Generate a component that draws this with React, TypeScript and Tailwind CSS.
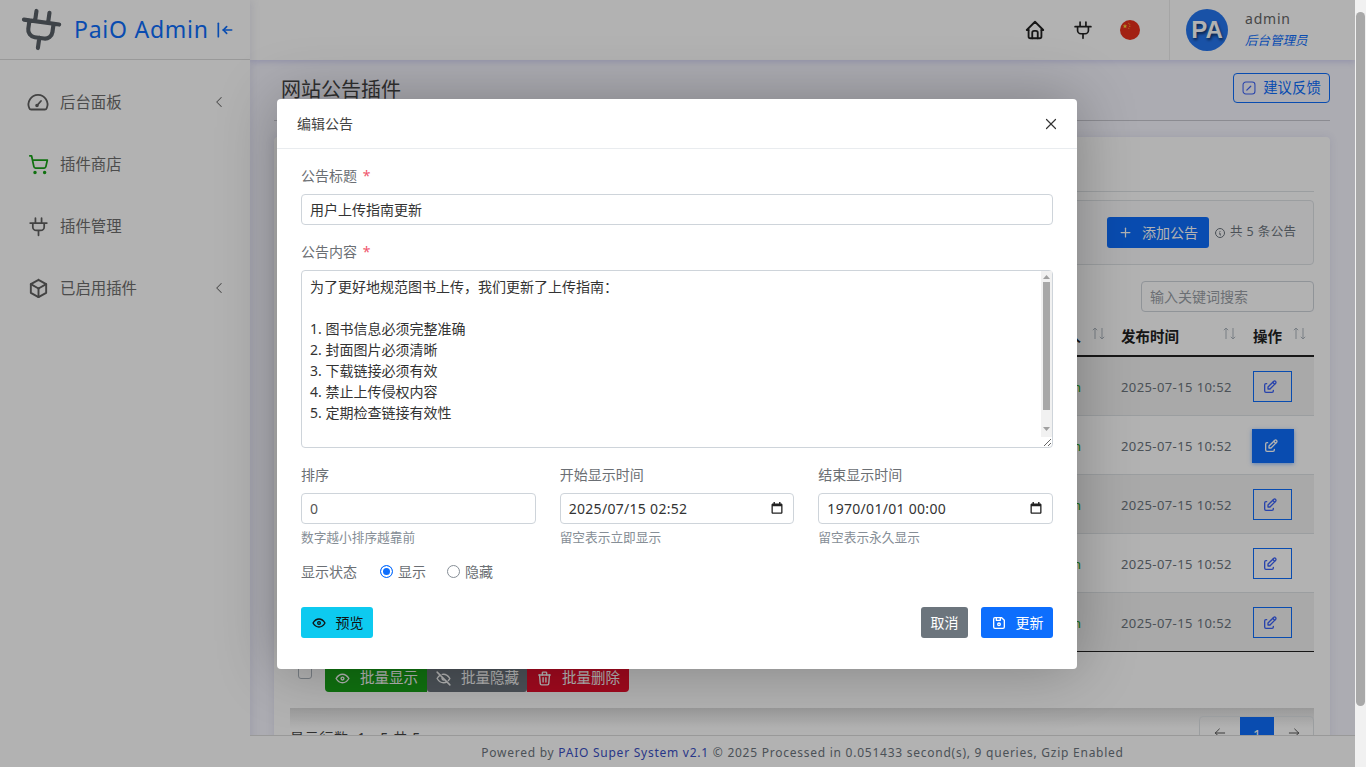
import React from "react";
import {
  TbHome, TbBox, TbEye, TbEyeOff, TbTrash, TbDeviceFloppy,
  TbEdit, TbPlus, TbInfoCircle, TbChevronLeft, TbArrowBarToLeft, TbX, TbArrowLeft, TbArrowRight,
} from "react-icons/tb";
import { ShoppingCart } from "lucide-react";

const Plug = ({ className = "", sw = 2 }: { className?: string; sw?: number }) => (
  <svg viewBox="0 0 24 24" fill="none" stroke="currentColor" strokeWidth={sw} strokeLinecap="round" strokeLinejoin="round" className={className}>
    <path d="M8.5 2.5V8M15.5 2.5V8M2.500 8h19M5.500 8v4.500a4 4 0 0 0 4 4h5a4 4 0 0 0 4-4V8M12 16.500v5.500" />
  </svg>
);

const Gauge = ({ className = "" }: { className?: string }) => (
  <svg viewBox="0 0 24 24" fill="none" stroke="currentColor" strokeWidth="1.8" strokeLinecap="round" strokeLinejoin="round" className={className}>
    <path d="M5.200 19.500h13.600a2 2 0 0 0 1.900-1.300A9.500 9.500 0 1 0 3.300 18.200a2 2 0 0 0 1.900 1.300Z" />
    <path d="M11 15.500 15 11" />
    <circle cx="11" cy="15.500" r=".9" fill="currentColor" />
  </svg>
);

const Sort = ({ className = "" }: { className?: string }) => (
  <svg viewBox="0 0 13 13" fill="none" stroke="currentColor" strokeWidth="1" className={className}>
    <path d="M3 12V1M.8 3.2 3 1l2.2 2.2M10 1v11M7.8 9.8 10 12l2.2-2.2" />
  </svg>
);

const Flag = () => (
  <svg viewBox="0 0 20 20" className="w-5 h-5">
    <circle cx="10" cy="10" r="10" fill="#e8301c" />
    <path d="M5 3.8l.6 1.6 1.700.1-1.300 1 .4 1.700L5 7.300l-1.400.9.4-1.700-1.300-1 1.700-.1z" fill="#ffd83a" />
    <circle cx="8.8" cy="3.2" r=".5" fill="#ffd83a" />
    <circle cx="9.8" cy="4.8" r=".5" fill="#ffd83a" />
    <circle cx="9.8" cy="6.6" r=".5" fill="#ffd83a" />
    <circle cx="8.8" cy="8.2" r=".5" fill="#ffd83a" />
  </svg>
);

const Note = () => (
  <svg viewBox="0 0 16 16" fill="none" stroke="#3b62f6" strokeWidth="1.2" className="w-[14px] h-[14px] shrink-0">
    <rect x="1.2" y="1.2" width="13.6" height="13.6" rx="3.2" />
    <path d="M5.5 10.5 10 6" strokeLinecap="round" strokeWidth="1.4" />
  </svg>
);

const Calendar = () => (
  <svg viewBox="0 0 12 12" className="absolute right-[11px] top-[9px] w-[12px] h-[12px] text-[#222]" fill="currentColor">
    <path d="M2.500 0h1.400v1.400h4.200V0h1.400v1.400h.7c.7 0 1.300.6 1.300 1.300v7.800c0 .7-.6 1.300-1.300 1.300H1.800c-.7 0-1.300-.6-1.300-1.300V2.700c0-.7.6-1.300 1.300-1.300h.7V0Zm-.7 4.300v6.300h8.400V4.300H1.800Z" />
  </svg>
);

const NavItem = ({ icon, label, chevron }: { icon: React.ReactNode; label: string; chevron?: boolean }) => (
  <div className="h-[62px] pl-[28px] pr-[22px] flex items-center text-[15.4px] text-[#6e6e6e]">
    <span className="w-[32px] shrink-0 text-[#616161] flex items-center">{icon}</span>
    <span className="flex-1 pt-[2px]">{label}</span>
    {chevron && <TbChevronLeft className="w-[18px] h-[18px] stroke-[1.4]" />}
  </div>
);

const Th = ({ children, className = "", sort }: { children?: React.ReactNode; className?: string; sort: string }) => (
  <th className={`relative font-bold text-[14.5px] text-[#222] text-left border-b-2 border-[#222] pt-[4px] ${className}`}>
    {children}
    <Sort className={`absolute top-[12px] w-[13px] h-[13px] text-[#adb5bd] ${sort}`} />
  </th>
);

const rows = [0, 1, 2, 3, 4];

const Field = ({ label, children, help }: { label: string; children: React.ReactNode; help: string }) => (
  <div>
    <label className="block text-[14px] leading-[21px] mb-[8px] text-[#6b6f74]">{label}</label>
    {children}
    <p className="mt-[4px] text-[12.7px] leading-[18px] text-[#868e96]">{help}</p>
  </div>
);

const DateBox = ({ value }: { value: string }) => (
  <div className="relative">
    <input readOnly value={value} className="w-full h-[31px] px-[8px] text-[14px] tracking-[0.3px] text-[#333] border border-[#ced4da] rounded-[4px] outline-none" />
    <Calendar />
  </div>
);

const textareaValue = `为了更好地规范图书上传，我们更新了上传指南：

1. 图书信息必须完整准确
2. 封面图片必须清晰
3. 下载链接必须有效
4. 禁止上传侵权内容
5. 定期检查链接有效性`;

export default function App() {
  return (
    <div className="h-screen w-full flex overflow-hidden font-['Noto_Sans','Noto_Sans_CJK_SC',sans-serif]">
      <div className="relative flex-1 flex min-w-0 overflow-hidden bg-[#f6f6ff]">
        {/* Sidebar */}
        <aside className="w-[250px] shrink-0 bg-white z-10 shadow-[2px_0_8px_rgba(90,90,160,0.12)]">
          <div className="h-[60px] border-b border-[#dcdcdc] flex items-center pl-[18px]">
            <Plug sw={2.2} className="w-[45px] h-[45px] text-[#5a6068] rotate-[8deg] shrink-0" />
            <span className="ml-[11px] text-[23px] tracking-[0.75px] text-[#0d6efd]">PaiO Admin</span>
            <TbArrowBarToLeft className="ml-[6px] w-[20px] h-[20px] text-[#0d6efd]" />
          </div>
          <nav className="pt-[11px]">
            <NavItem label="后台面板" chevron icon={<Gauge className="w-[24px] h-[24px] -ml-[2px]" />} />
            <NavItem label="插件商店" icon={<ShoppingCart className="w-[21px] h-[21px] text-[#18a318]" />} />
            <NavItem label="插件管理" icon={<Plug className="w-[21px] h-[21px]" />} />
            <NavItem label="已启用插件" chevron icon={<TbBox className="w-[23px] h-[23px] -ml-[1px]" />} />
          </nav>
        </aside>

        {/* Main */}
        <div className="flex-1 min-w-0 flex flex-col">
          <header className="h-[60px] shrink-0 bg-white flex items-center justify-end shadow-[0_2px_6px_rgba(110,110,210,0.25)] z-[5]">
            <TbHome className="w-[22px] h-[22px] text-[#222] mr-[27px]" />
            <Plug className="w-[20px] h-[20px] text-[#222] mr-[27px]" />
            <Flag />
            <div className="ml-[29px] h-[60px] w-[186px] border-l border-[#ececec] flex items-center pl-[16px]">
              <div className="w-[42px] h-[42px] rounded-full bg-[#2576f0] text-white font-bold text-[24px] flex items-center justify-center [text-shadow:1px_2px_3px_rgba(0,0,0,0.6)] font-['Liberation_Sans',sans-serif]">PA</div>
              <div className="ml-[17px]">
                <div className="text-[14px] leading-[20px] tracking-[0.8px] text-[#666]">admin</div>
                <div className="mt-[2px] text-[12.5px] leading-[20px] italic text-[#0d6efd]">后台管理员</div>
              </div>
            </div>
          </header>

          <main className="flex-1 min-h-0 pl-[24px] pr-[25px] overflow-hidden">
            <div className="h-[61px] flex items-start justify-between border-b border-[#c8c8d0] pt-[13px]">
              <h1 className="text-[20px] leading-[34px] pl-[7px] text-[#444]">网站公告插件</h1>
              <button className="w-[97px] h-[30px] border border-[#0d6efd] rounded-[4px] text-[#0d6efd] text-[14.4px] flex items-center justify-center gap-[7px] whitespace-nowrap">
                <Note />建议反馈
              </button>
            </div>

            <section className="mt-[16px] bg-white rounded-[4px] px-[16px] shadow-[0_0_8px_rgba(90,90,160,0.12)] h-[700px]">
              <div className="h-[55px] border-b border-[#dee2e6]" />
              <div className="mt-[8px] h-[65px] border border-[#dee2e6] rounded-[4px] bg-[#fbfbfd] flex items-center justify-end pr-[16px]">
                <button className="w-[102px] h-[31px] rounded-[3px] bg-[#0d6efd] text-white text-[14px] flex items-center justify-center gap-[9px]">
                  <TbPlus className="w-[15px] h-[15px]" />添加公告
                </button>
                <span className="ml-[5px] flex items-center gap-[4px] text-[12.5px] tracking-[0.4px] text-[#6c757d] w-[83px] whitespace-nowrap">
                  <TbInfoCircle className="w-[12px] h-[12px] shrink-0" />共 5 条公告
                </span>
              </div>
              <div className="mt-[16px] flex justify-end">
                <input readOnly placeholder="输入关键词搜索" className="w-[173px] h-[31px] px-[8px] text-[14px] bg-white border border-[#ced4da] rounded-[4px] outline-none placeholder:text-[#9aa0a6]" />
              </div>
              <table className="mt-[3px] w-[1024px] table-fixed border-collapse">
                <colgroup>
                  <col />
                  <col className="w-[100px]" />
                  <col className="w-[132px]" />
                  <col className="w-[72px]" />
                </colgroup>
                <thead>
                  <tr className="h-[41px]">
                    <th className="border-b-2 border-[#222]" />
                    <Th sort="right-[5px]" className="text-right pr-[29px]">发布人</Th>
                    <Th sort="right-[6px]" className="pl-[11px]">发布时间</Th>
                    <Th sort="right-[8px]" className="pl-[11px]">操作</Th>
                  </tr>
                </thead>
                <tbody>
                  {rows.map((i) => (
                    <tr key={i} className={`h-[59px] border-b ${i === 4 ? "border-[#222]" : "border-[#dee2e6]"} ${i % 2 === 0 ? "bg-[#f2f2f2]" : ""}`}>
                      <td />
                      <td className="text-right pr-[29px] pt-[4px] text-[13px] text-[#18a318]">admin</td>
                      <td className="pl-[11px] pt-[4px] text-[13px] tracking-[0.4px] text-[#6c757d]">2025-07-15 10:52</td>
                      <td className="pl-[11px] pt-[2px]">
                        {i === 1 ? (
                          <button className="-ml-[1px] w-[42px] h-[34px] bg-[#0d6efd] text-white flex items-center justify-center shadow-[0_1px_4px_rgba(13,110,253,0.5)]">
                            <TbEdit className="w-[16px] h-[16px] mr-[4px]" />
                          </button>
                        ) : (
                          <button className="w-[39px] h-[31px] border border-[#0d6efd] text-[#3b62f6] flex items-center justify-center">
                            <TbEdit className="w-[16px] h-[16px] mr-[5px]" />
                          </button>
                        )}
                      </td>
                    </tr>
                  ))}
                </tbody>
              </table>
              <div className="mt-[13px] flex items-start">
                <input type="checkbox" readOnly className="ml-[8px] w-[14px] h-[14px] appearance-none border border-[#adb5bd] rounded-[3px] bg-white" />
                <div className="ml-[13px] flex text-[14.5px] text-white">
                  <button className="w-[102px] h-[27px] bg-[#18a318] rounded-bl-[4px] flex items-center justify-center gap-[9px] whitespace-nowrap"><TbEye className="w-[17px] h-[17px]" />批量显示</button>
                  <button className="w-[100px] h-[27px] bg-[#6c757d] rounded-b-[3px] flex items-center justify-center gap-[9px] whitespace-nowrap"><TbEyeOff className="w-[17px] h-[17px]" />批量隐藏</button>
                  <button className="w-[102px] h-[27px] bg-[#e50d2b] rounded-br-[4px] flex items-center justify-center gap-[9px] whitespace-nowrap"><TbTrash className="w-[17px] h-[17px]" />批量删除</button>
                </div>
              </div>
              <div className="mt-[16px] h-[20px] bg-gradient-to-b from-[#dcdcdc] to-white" />
              <div className="-mt-[12px] flex items-start justify-between">
                <span className="pt-[11px] text-[14px] tracking-[0.7px] text-[#444]">显示行数: 1 - 5 共 5</span>
                <div className="flex h-[38px] border border-[#dee2e6] rounded-[4px] text-[14px] text-[#555]">
                  <span className="w-[40px] pb-[4px] flex items-center justify-center"><TbArrowLeft className="w-[16px] h-[16px] stroke-[1.5]" /></span>
                  <span className="w-[34px] flex items-center justify-center bg-[#0d6efd] text-white">1</span>
                  <span className="w-[39px] pb-[4px] flex items-center justify-center"><TbArrowRight className="w-[16px] h-[16px] stroke-[1.5]" /></span>
                </div>
              </div>
            </section>
          </main>
        </div>

        {/* Footer */}
        <footer className="absolute z-20 left-[250px] right-0 bottom-0 h-[32px] pt-[2px] bg-white border-t border-[#dcdcdc] flex items-center justify-center text-[12px] tracking-[0.75px] text-[#6c757d] whitespace-nowrap">
          <span>Powered by <span className="text-[#3a4fc4]">PAIO Super System v2.1</span> © 2025 Processed in 0.051433 second(s), 9 queries, Gzip Enabled</span>
        </footer>

        {/* Backdrop + Modal */}
        <div className="absolute inset-0 z-30 bg-black/30 flex justify-center items-start pt-[99px] pr-[1px]">
          <div className="w-[800px] h-[570px] bg-white rounded-[4px] shadow-[0_0_60px_rgba(0,0,0,0.28)]">
            <div className="h-[50px] border-b border-[#e9ecef] flex items-center justify-between pl-[20px] pr-[17px]">
              <span className="text-[14px] text-[#444]">编辑公告</span>
              <TbX className="w-[18px] h-[18px] text-[#333] stroke-[1.6]" />
            </div>
            <form className="px-[24px] pt-[16px]">
              <label className="block text-[14px] leading-[21px] mb-[8px] text-[#6b6f74]">公告标题 <span className="ml-[2px] text-[#f0566c]">*</span></label>
              <input readOnly value="用户上传指南更新" className="w-full h-[31px] px-[8px] pb-[2px] text-[14px] text-[#333] border border-[#ced4da] rounded-[4px] outline-none" />
              <label className="block mt-[15px] text-[14px] leading-[23px] mb-[7px] text-[#6b6f74]">公告内容 <span className="ml-[2px] text-[#f0566c]">*</span></label>
              <div className="relative h-[178px]">
                <textarea readOnly value={textareaValue} className="block w-full h-[178px] pt-[5px] pb-[6px] px-[8px] text-[14px] leading-[21px] text-[#333] border border-[#ced4da] rounded-[4px] outline-none overflow-hidden" />
                <div className="absolute right-[1px] top-[1px] bottom-[11px] w-[11px] bg-[#f1f1f1] pointer-events-none flex flex-col items-center">
                  <svg viewBox="0 0 7 4" className="mt-[4px] w-[7px] h-[4px] fill-[#a0a0a0]"><path d="M3.500 0 7 4H0z" /></svg>
                  <div className="mt-[3px] w-[7px] h-[128px] bg-[#a8a8a8]" />
                  <svg viewBox="0 0 7 4" className="mt-[17px] w-[7px] h-[4px] fill-[#a0a0a0]"><path d="M0 0h7L3.500 4z" /></svg>
                </div>
              </div>
              <div className="mt-[16px] grid grid-cols-3 gap-[24px]">
                <Field label="排序" help="数字越小排序越靠前">
                  <input readOnly value="0" className="w-full h-[31px] px-[8px] text-[14px] text-[#555] border border-[#ced4da] rounded-[4px] outline-none" />
                </Field>
                <Field label="开始显示时间" help="留空表示立即显示"><DateBox value="2025/07/15 02:52" /></Field>
                <Field label="结束显示时间" help="留空表示永久显示"><DateBox value="1970/01/01 00:00" /></Field>
              </div>
              <div className="mt-[15px] h-[21px] flex items-center text-[14px] text-[#6b6f74]">
                <span>显示状态</span>
                <input type="radio" readOnly checked className="ml-[23px] w-[13px] h-[13px] appearance-none rounded-full border border-[#0d6efd] bg-[#0d6efd] shadow-[inset_0_0_0_2px_white]" />
                <span className="ml-[5px]">显示</span>
                <input type="radio" readOnly checked={false} className="ml-[21px] w-[13px] h-[13px] appearance-none rounded-full border border-[#868e96] bg-white" />
                <span className="ml-[5px]">隐藏</span>
              </div>
              <div className="mt-[25px] flex items-center text-[14px]">
                <button type="button" className="w-[72px] h-[31px] rounded-[3px] bg-[#0dcaf0] text-[#111] flex items-center justify-center gap-[9px]">
                  <TbEye className="w-[16px] h-[16px]" />预览
                </button>
                <button type="button" className="ml-auto w-[47px] h-[31px] rounded-[3px] bg-[#6c757d] text-white">取消</button>
                <button type="button" className="ml-[13px] w-[72px] h-[31px] rounded-[3px] bg-[#0d6efd] text-white flex items-center justify-center gap-[9px]">
                  <TbDeviceFloppy className="w-[16px] h-[16px]" />更新
                </button>
              </div>
            </form>
          </div>
        </div>
      </div>

      {/* Page scrollbar */}
      <div className="w-[11px] shrink-0 bg-[#f1f1f1] pt-[12px]">
        <div className="w-[9px] mx-auto h-[694px] rounded-full bg-[#a8a8a8]" />
      </div>
    </div>
  );
}
